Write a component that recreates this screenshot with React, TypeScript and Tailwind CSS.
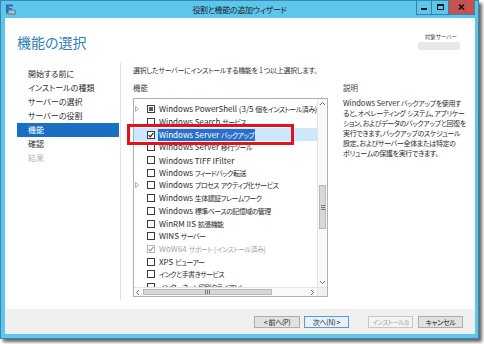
import React from 'react';

type Row = {
  label: string;
  expand?: boolean;
  state?: 'off' | 'on' | 'partial';
  selected?: boolean;
  disabled?: boolean;
};

const rows: Row[] = [
  { label: 'Windows PowerShell (3/5 個をインストール済み)', expand: true, state: 'partial' },
  { label: 'Windows Search サービス' },
  { label: 'Windows Server バックアップ', state: 'on', selected: true },
  { label: 'Windows Server 移行ツール' },
  { label: 'Windows TIFF IFilter' },
  { label: 'Windows フィードバック転送' },
  { label: 'Windows プロセス アクティブ化サービス', expand: true },
  { label: 'Windows 生体認証フレームワーク' },
  { label: 'Windows 標準ベースの記憶域の管理' },
  { label: 'WinRM IIS 拡張機能' },
  { label: 'WINS サーバー' },
  { label: 'WoW64 サポート (インストール済み)', state: 'on', disabled: true },
  { label: 'XPS ビューアー' },
  { label: 'インクと手書きサービス' },
  { label: 'インターネット印刷クライアント' },
];

const navItems = ['開始する前に', 'インストールの種類', 'サーバーの選択', 'サーバーの役割', '機能', '確認', '結果'];

const descLines = [
  'Windows Server バックアップを使用す',
  'ると、オペレーティング システム、アプリケー',
  'ション、およびデータのバックアップと回復を',
  '実行できます。バックアップのスケジュール',
  '設定、およびサーバー全体または特定の',
  'ボリュームの保護を実行できます。',
];

// split Japanese runs so they can be set a bit narrower than the latin text
const CJK = /([\u3000-\u30ff\u3400-\u9fff\uff00-\uffef]+)/;
const Txt = ({ text, cjk }: { text: string; cjk: string }) => (
  <>
    {text.split(CJK).map((part, i) =>
      i % 2 === 1 ? (
        <span key={i} className={cjk}>
          {part}
        </span>
      ) : (
        part
      )
    )}
  </>
);

const Check = ({ state = 'off', disabled }: { state?: Row['state']; disabled?: boolean }) => (
  <span
    className={`w-[8px] h-[8px] shrink-0 flex items-center justify-center bg-white border ${
      disabled ? 'border-[#b5b5b5]' : 'border-[#3c3c3c]'
    }`}
  >
    {state === 'on' && (
      <svg width="6" height="6" viewBox="0 0 6 6">
        <path d="M0.6 3.2 L2.3 4.9 L5.4 0.8" fill="none" stroke={disabled ? '#9a9a9a' : '#222'} strokeWidth="1.2" />
      </svg>
    )}
    {state === 'partial' && <span className="w-[4px] h-[4px] bg-[#5a5a5a]" />}
  </span>
);

const Chevron = ({ dir }: { dir: 'up' | 'down' | 'left' | 'right' }) => {
  const d = {
    up: 'M1 4 L3.5 1.5 L6 4',
    down: 'M1 2 L3.5 4.5 L6 2',
    left: 'M4 1 L1.5 3.5 L4 6',
    right: 'M2 1 L4.5 3.5 L2 6',
  }[dir];
  return (
    <svg width="7" height="7" viewBox="0 0 7 7">
      <path d={d} fill="none" stroke="#6b6b6b" strokeWidth="1" />
    </svg>
  );
};

export default function App() {
  return (
    <div className="w-[484px] h-[344px] bg-white overflow-hidden font-['Noto_Sans_CJK_JP','Noto_Sans',sans-serif] [font-feature-settings:'palt'] text-[#2b2b2b]">
      <div className="w-[479px] h-[339px] bg-[#5cc6ed] border border-[#3b88ad] flex flex-col shadow-[3px_3px_3px_rgba(0,0,0,0.6)]">
        {/* title bar */}
        <div className="h-[17px] grid grid-cols-[1fr_auto_1fr] shrink-0">
          <div className="pl-[4px] pt-[3px]">
            <svg width="11" height="11" viewBox="0 0 11 11">
              <rect x="1" y="0.5" width="3" height="9" fill="#2f6fb0" />
              <rect x="4" y="0.5" width="4" height="2" fill="#2f6fb0" />
              <rect x="4" y="4" width="3" height="1.5" fill="#2f6fb0" />
              <rect x="3" y="6" width="7.5" height="4.5" rx="1" fill="#8fa3b3" stroke="#5d7080" strokeWidth="0.6" />
              <rect x="4.5" y="7.5" width="4.5" height="1" fill="#d8e2ea" />
            </svg>
          </div>
          <div className="text-[8px] tracking-[-0.3px] leading-[17px] text-[#1d1d1d] whitespace-nowrap">役割と機能の追加ウィザード</div>
          <div className="flex justify-end pr-[3px] -mt-[1px]">
            <div className="flex h-[15px] border border-[#3c7fa3] border-t-0">
              <div className="w-[15px] flex items-end justify-center pb-[4px] border-r border-[#3c7fa3]">
                <span className="w-[6px] h-[2px] bg-[#151515]" />
              </div>
              <div className="w-[17px] flex items-center justify-center border-r border-[#3c7fa3]">
                <span className="w-[7px] h-[6px] border border-[#151515] border-t-2" />
              </div>
              <div className="w-[25px] bg-[#c75350] flex items-center justify-center">
                <svg width="7" height="6" viewBox="0 0 7 6">
                  <path d="M1 0.5 L6 5.5 M6 0.5 L1 5.5" stroke="#111" strokeWidth="1.6" />
                </svg>
              </div>
            </div>
          </div>
        </div>

        {/* client area */}
        <div className="flex-1 mx-[4px] mr-[3px] mb-[4px] bg-white flex flex-col">
          {/* header */}
          <div className="h-[42px] shrink-0 flex justify-between">
            <div className="pl-[12px] pt-[14px] text-[14px] leading-[20px] text-[#2f80b8]">機能の選択</div>
            <div className="pr-[15px] pt-[15px] flex flex-col items-end">
              <div className="text-[5.5px] leading-[8px] text-[#444] mr-[3px]">対象サーバー</div>
              <div className="w-[42px] h-[8px] mt-[1px] bg-[#e8e8e8] rounded-[2px]" />
            </div>
          </div>

          {/* body */}
          <div className="flex-1 flex">
            <div className="w-[116px] shrink-0 border-r border-[#e2e2e2] mt-[3px] mb-[9px] pl-[12px] pr-[1px] pt-[4px]">
              {navItems.map((item, i) => (
                <div
                  key={item}
                  className={`h-[14px] leading-[14px] pl-[11px] text-[8px] whitespace-nowrap ${
                    i === 4 ? 'bg-[#1a70c0] text-white' : i === 6 ? 'text-[#b4b4b4]' : 'text-[#2b2b2b]'
                  }`}
                >
                  {item}
                </div>
              ))}
            </div>

            <div className="flex-1 pl-[12px] pt-[5px]">
              <div className="h-[10px] leading-[10px] text-[7px] tracking-[-0.3px] whitespace-nowrap text-[#333]">
                選択したサーバーにインストールする機能を 1 つ以上選択します。
              </div>
              <div className="flex mt-[8px]">
                <div className="w-[195px] shrink-0">
                  <div className="h-[10px] leading-[10px] text-[7.5px] text-[#444]">機能</div>
                  <div className="relative mt-[5px] h-[199px] border border-[#adb0b6] bg-white flex flex-col">
                    <div className="flex-1 flex min-h-0">
                      <div className="flex-1 overflow-hidden pt-[4px]">
                        {rows.map((r) => (
                          <div
                            key={r.label}
                            className={`h-[12.7px] flex items-center ${r.selected ? 'bg-[#cde8fc]' : ''}`}
                          >
                            <div className="w-[13px] shrink-0 pl-[1px] flex items-center">
                              {r.expand && (
                                <svg width="4" height="6" viewBox="0 0 4 6">
                                  <path d="M0.5 0.5 L3.5 3 L0.5 5.5 Z" fill="none" stroke="#9a9a9a" strokeWidth="0.8" />
                                </svg>
                              )}
                            </div>
                            <Check state={r.state} disabled={r.disabled} />
                            <span
                              className={`ml-[3px] px-[1px] text-[8px] leading-[11px] whitespace-nowrap ${
                                r.selected ? 'bg-[#2a6fc9] text-white' : r.disabled ? 'text-[#a6a6a6]' : 'text-[#2b2b2b]'
                              }`}
                            >
                              <Txt text={r.label} cjk="text-[7px] tracking-[-0.55px]" />
                            </span>
                          </div>
                        ))}
                      </div>
                      {/* vertical scrollbar */}
                      <div className="w-[10px] shrink-0 flex flex-col border-l border-[#e4e4e4] bg-[#f9f9f9]">
                        <div className="h-[10px] flex items-center justify-center">
                          <Chevron dir="up" />
                        </div>
                        <div className="flex-1 pt-[76px] px-[1px]">
                          <div className="h-[44px] bg-[#d8d8d8] border border-[#b9b9b9] flex flex-col items-center justify-center gap-[1px]">
                            <span className="w-[4px] h-[1px] bg-[#777]" />
                            <span className="w-[4px] h-[1px] bg-[#777]" />
                            <span className="w-[4px] h-[1px] bg-[#777]" />
                          </div>
                        </div>
                        <div className="h-[10px] flex items-center justify-center">
                          <Chevron dir="down" />
                        </div>
                      </div>
                    </div>
                    {/* horizontal scrollbar */}
                    <div className="h-[9px] shrink-0 flex border-t border-[#e4e4e4] bg-[#f9f9f9]">
                      <div className="w-[9px] flex items-center justify-center">
                        <Chevron dir="left" />
                      </div>
                      <div className="w-[129px] my-[1px] bg-[#d8d8d8] border border-[#b9b9b9] flex items-center justify-center gap-[1px]">
                        <span className="w-[1px] h-[4px] bg-[#777]" />
                        <span className="w-[1px] h-[4px] bg-[#777]" />
                        <span className="w-[1px] h-[4px] bg-[#777]" />
                      </div>
                      <div className="flex-1" />
                      <div className="w-[9px] flex items-center justify-center">
                        <Chevron dir="right" />
                      </div>
                      <div className="w-[10px] border-l border-[#e4e4e4] bg-[#f0f0f0]" />
                    </div>
                    {/* red annotation box */}
                    <div className="absolute left-[-7px] top-[25px] w-[167px] h-[21px] border-[3px] border-[#e3121c]" />
                  </div>
                </div>
                <div className="ml-[15px]">
                  <div className="h-[10px] leading-[10px] text-[7.5px] text-[#444]">説明</div>
                  <div className="mt-[5px] text-[7.5px] leading-[10px] text-[#2b2b2b]">
                    {descLines.map((l) => (
                      <div key={l} className="whitespace-nowrap">
                        <Txt text={l} cjk="text-[7px] tracking-[-0.35px]" />
                      </div>
                    ))}
                  </div>
                </div>
              </div>
            </div>
          </div>

          {/* footer */}
          <div className="h-[25px] shrink-0 bg-[#f0f0f0] flex justify-end items-start pt-[7px] pr-[12px] text-[7px] tracking-[-0.3px]">
            <button className="w-[46px] h-[12px] leading-[10px] bg-[#e1e1e1] border border-[#adadad] text-[#222] whitespace-nowrap">&lt; 前へ(P)</button>
            <button className="w-[45px] h-[12px] leading-[10px] ml-[4px] bg-[#e5f1fb] border border-[#5b9bd5] text-[#222] whitespace-nowrap">次へ(N) &gt;</button>
            <button className="w-[45px] h-[12px] leading-[10px] ml-[19px] bg-[#f4f4f4] border border-[#c6c6c6] text-[#a3a3a3] whitespace-nowrap text-[6.5px] tracking-[-0.5px]">インストール(I)</button>
            <button className="w-[45px] h-[12px] leading-[10px] ml-[5px] bg-[#e1e1e1] border border-[#adadad] text-[#222] whitespace-nowrap">キャンセル</button>
          </div>
        </div>
      </div>
    </div>
  );
}
